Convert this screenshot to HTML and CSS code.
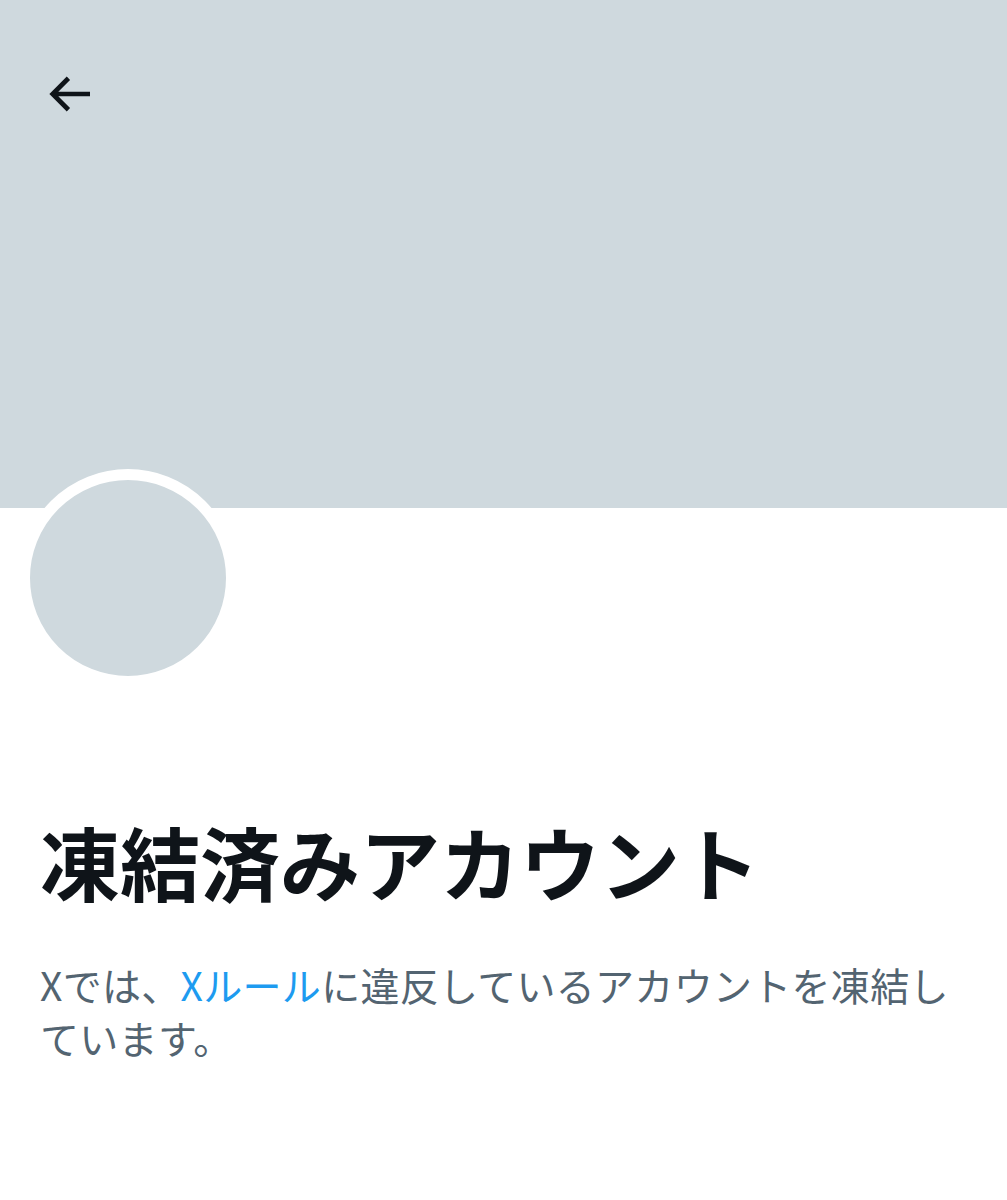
FILE: index.html
```html
<!DOCTYPE html>
<html lang="ja">
<head>
    <meta charset="UTF-8">
    <meta name="viewport" content="width=device-width, initial-scale=1.0">
    <title>凍結済みアカウント / X</title>
    <link rel="stylesheet" href="styles.css">
</head>
<body>

<header class="banner">
    <button class="back-btn" aria-label="戻る">
        <svg viewBox="0 0 24 24" class="back-icon"><path d="M7.414 13l5.043 5.04-1.414 1.42L3.586 12l7.457-7.46 1.414 1.42L7.414 11H21v2H7.414z"></path></svg>
    </button>
</header>

<div class="profile">
    <div class="avatar"></div>

    <h1 class="title">凍結済みアカウント</h1>
    <p class="notice">Xでは、<a href="#" class="rules-link">Xルール</a>に違反しているアカウントを凍結しています。</p>
</div>

</body>
</html>
```

FILE: styles.css
```css
body {
    margin: 0;
    padding: 0;
    background: #fff;
    font-family: "Noto Sans CJK JP", "Noto Sans", sans-serif;
    color: #0f1419;
}
.banner {
    height: 508px;
    background-color: #cfd9de;
    padding: 66px 0 0 41px;
    box-sizing: border-box;
}
.back-btn {
    display: block;
    width: 56px;
    height: 56px;
    padding: 0;
    border: none;
    background: transparent;
    cursor: pointer;
}
.back-icon {
    width: 56px;
    height: 56px;
    fill: #0f1419;
}
.profile {
    padding: 0 40px;
}
.avatar {
    width: 196px;
    height: 196px;
    margin: -39px 0 0 -21px;
    border: 11px solid #fff;
    border-radius: 50%;
    background-color: #cfd9de;
}
.title {
    margin: 125px 0 0;
    font-size: 80px;
    line-height: 1.2;
    font-weight: 700;
}
.notice {
    margin: 50px 0 0;
    font-size: 39px;
    line-height: 53px;
    letter-spacing: 0.3px;
    color: #536471;
}
.rules-link {
    color: #1d9bf0;
    text-decoration: none;
}
```
